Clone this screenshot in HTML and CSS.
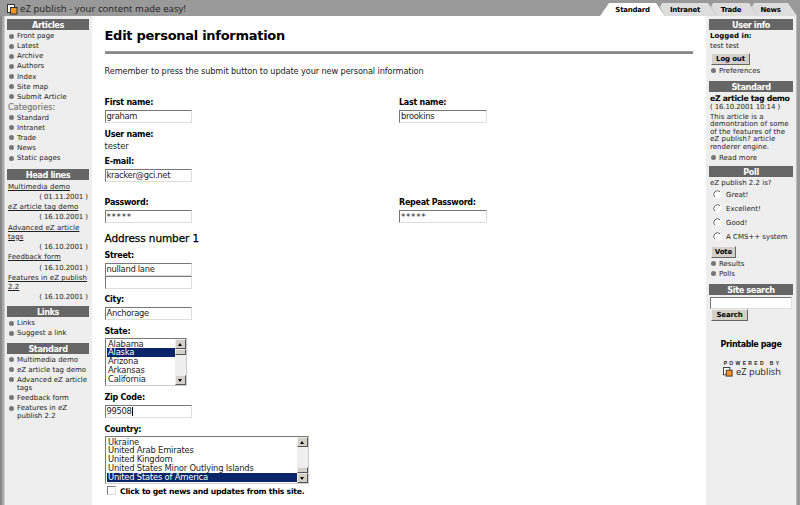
FILE: index.html
```html
<!DOCTYPE html>
<html lang="en">
<head>
<meta charset="utf-8">
<title>eZ publish</title>
<link rel="stylesheet" href="styles.css">
</head>
<body>
<header class="top">
  <svg class="logo" width="11" height="11" viewBox="0 0 11 11"><rect x=".5" y=".5" width="7" height="8" fill="#fff" stroke="#333"/><rect x="3.5" y="3.5" width="6.5" height="6.5" fill="#f7921c" stroke="#333"/></svg>
  <span class="brand">eZ publish - your content made easy!</span>
  <nav class="tabs">
    <a class="tab on"><span>Standard</span></a><a class="tab t2"><span>Intranet</span></a><a class="tab t3"><span>Trade</span></a><a class="tab t4"><span>News</span></a>
  </nav>
</header>
<div class="page">
  <aside class="left">
    <h2>Articles</h2>
    <ul class="list">
      <li>Front page</li><li>Latest</li><li>Archive</li><li>Authors</li><li>Index</li><li>Site map</li><li>Submit Article</li>
    </ul>
    <div class="cat">Categories:</div>
    <ul class="list second">
      <li>Standard</li><li>Intranet</li><li>Trade</li><li>News</li><li>Static pages</li>
    </ul>
    <h2>Head lines</h2>
    <div class="news">
      <a>Multimedia demo</a><p>( 01.11.2001 )</p>
      <a>eZ article tag demo</a><p>( 16.10.2001 )</p>
      <a>Advanced eZ article<br>tags</a><p>( 16.10.2001 )</p>
      <a>Feedback form</a><p>( 16.10.2001 )</p>
      <a>Features in eZ publish<br>2.2</a><p>( 16.10.2001 )</p>
    </div>
    <h2>Links</h2>
    <ul class="list links"><li>Links</li><li>Suggest a link</li></ul>
    <h2>Standard</h2>
    <ul class="list">
      <li>Multimedia demo</li><li>eZ article tag demo</li><li>Advanced eZ article<br>tags</li><li>Feedback form</li><li>Features in eZ<br>publish 2.2</li>
    </ul>
  </aside>
  <main class="main">
    <h1>Edit personal information</h1>
    <div class="rule"></div>
    <p class="intro">Remember to press the submit button to update your new personal information</p>
    <div class="pair names">
      <div><label>First name:</label><div class="input">graham</div></div>
      <div><label>Last name:</label><div class="input">brookins</div></div>
    </div>
    <div class="field user"><label>User name:</label><div class="value">tester</div></div>
    <div class="field email"><label>E-mail:</label><div class="input">kracker@gci.net</div></div>
    <div class="pair pass">
      <div><label>Password:</label><div class="input stars">*****</div></div>
      <div><label>Repeat Password:</label><div class="input stars">*****</div></div>
    </div>
    <h3>Address number 1</h3>
    <div class="field street"><label>Street:</label><div class="input">nulland lane</div><div class="input"></div></div>
    <div class="field city"><label>City:</label><div class="input">Anchorage</div></div>
    <div class="field state"><label>State:</label>
      <div class="select small">
        <div class="options"><div>Alabama</div><div class="sel">Alaska</div><div>Arizona</div><div>Arkansas</div><div>California</div></div>
        <div class="scroll"><i class="btn up"></i><i class="thumb"></i><i class="gap"></i><i class="btn down"></i></div>
      </div>
    </div>
    <div class="field zip"><label>Zip Code:</label><div class="input caret">99508</div></div>
    <div class="field country"><label>Country:</label>
      <div class="select wide">
        <div class="options"><div>Ukraine</div><div>United Arab Emirates</div><div>United Kingdom</div><div>United States Minor Outlying Islands</div><div class="sel">United States of America</div></div>
        <div class="scroll"><i class="btn up"></i><i class="gap"></i><i class="thumb"></i><i class="btn down"></i></div>
      </div>
    </div>
    <div class="check"><i></i><span>Click to get news and updates from this site.</span></div>
  </main>
  <aside class="right">
    <h2>User info</h2>
    <div class="logged">Logged in:</div>
    <div class="who">test test</div>
    <div class="button logout">Log out</div>
    <ul class="list prefs"><li>Preferences</li></ul>
    <h2>Standard</h2>
    <div class="headline">eZ article tag demo</div>
    <div class="date">( 16.10.2001 10:14 )</div>
    <div class="blurb">This article is a<br>demontration of some<br>of the features of the<br>eZ publish? article<br>renderer engine.</div>
    <ul class="list more"><li>Read more</li></ul>
    <h2>Poll</h2>
    <div class="question">eZ publish 2.2 is?</div>
    <div class="radio"><svg width="9" height="9" viewBox="0 0 9 9"><circle cx="4.5" cy="4.5" r="4" fill="#fff"/><path d="M2 7.2A3.6 3.6 0 0 1 7 1.7" fill="none" stroke="#666"/></svg>Great!</div>
    <div class="radio"><svg width="9" height="9" viewBox="0 0 9 9"><circle cx="4.5" cy="4.5" r="4" fill="#fff"/><path d="M2 7.2A3.6 3.6 0 0 1 7 1.7" fill="none" stroke="#666"/></svg>Excellent!</div>
    <div class="radio"><svg width="9" height="9" viewBox="0 0 9 9"><circle cx="4.5" cy="4.5" r="4" fill="#fff"/><path d="M2 7.2A3.6 3.6 0 0 1 7 1.7" fill="none" stroke="#666"/></svg>Good!</div>
    <div class="radio"><svg width="9" height="9" viewBox="0 0 9 9"><circle cx="4.5" cy="4.5" r="4" fill="#fff"/><path d="M2 7.2A3.6 3.6 0 0 1 7 1.7" fill="none" stroke="#666"/></svg>A CMS++ system</div>
    <div class="button vote">Vote</div>
    <ul class="list results"><li>Results</li><li>Polls</li></ul>
    <h2>Site search</h2>
    <div class="searchbox"></div>
    <div class="button search">Search</div>
    <div class="printable">Printable page</div>
    <div class="powered">POWERED BY</div>
    <div class="ez"><svg width="10" height="10" viewBox="0 0 11 11"><rect x=".5" y=".5" width="7" height="8" fill="#fff" stroke="#333"/><rect x="3.5" y="3.5" width="6.5" height="6.5" fill="#f7921c" stroke="#333"/></svg><span>eZ publish</span></div>
  </aside>
</div>
</body>
</html>
```

FILE: styles.css
```css
* { box-sizing: border-box; margin: 0; padding: 0; }
body { width: 800px; height: 505px; overflow: hidden; background: #999; font-family: "DejaVu Sans", Verdana, sans-serif; color: #222; font-size: 7px; white-space: nowrap; }
.top { display: flex; height: 16px; padding-left: 7px; }
.logo { margin-top: 4px; flex: none; }
.brand { margin-left: 2px; font-family: "Open Sans", sans-serif; font-size: 9.5px; line-height: 18px; letter-spacing: .08px; width: 400px; flex: none; color: #222; }
.tabs { display: flex; margin-left: 180px; padding-top: 3px; }
.tab { height: 13px; background: #ddd; font-size: 7px; line-height: 14px; font-weight: bold; letter-spacing: -.25px; color: #000; text-align: center; flex: none; }
.on { width: 65px; background: #fff; clip-path: polygon(0 100%, 9px 0, 56px 0, 65px 100%); }
.t2 { width: 58px; margin-left: -6px; padding-right: 6px; clip-path: polygon(1px 4px, 3px 0, 49px 0, 58px 100%, 6px 100%); }
.t3 { width: 48px; margin-left: -7px; padding-right: 6px; clip-path: polygon(1px 4px, 3px 0, 39px 0, 48px 100%, 7px 100%); }
.t4 { width: 46px; margin-left: -7px; padding-right: 7px; clip-path: polygon(1px 4px, 3px 0, 37px 0, 46px 100%, 7px 100%); }
.page { display: flex; height: 489px; }
.left { width: 92px; flex: none; padding: 3px 3px 0 7px; background: linear-gradient(90deg, #888 0 2px, #aaa 2px 4px, #ccc 4px 5px, #eee 5px); }
.main { width: 614px; flex: none; background: #fff; padding-left: 12.5px; }
.right { width: 94px; flex: none; padding: 3px 7px 0 3px; background: linear-gradient(90deg, #eee 0 90px, #bbb 90px 91px, #999 91px); }
h2 { height: 11px; background: #666; color: #fff; font-size: 8.2px; line-height: 12px; text-align: center; letter-spacing: -.4px; }
.list { list-style: none; padding-top: 2px; }
.list li { position: relative; padding-left: 10px; line-height: 8px; margin-bottom: 2.15px; letter-spacing: 0; }
.list li::before { content: ""; position: absolute; left: 2px; top: 1.5px; width: 5px; height: 5px; border-radius: 50%; background: #777; }
.cat { height: 9px; padding-left: 1px; font-size: 8px; line-height: 9px; color: #777; letter-spacing: .15px; -webkit-text-stroke: .2px #777; }
.second { height: 57px; }
.left .list:first-of-type { height: 72.5px; }
.news { height: 126.5px; padding: 3px 1px 0; }
.news a { display: block; line-height: 8.6px; text-decoration: underline; letter-spacing: .07px; }
.news p { text-align: right; line-height: 10px; margin: .6px 0 1.6px; letter-spacing: -.08px; }
.left .links { height: 25.5px; }
h1 { font-size: 13px; line-height: 16px; padding-top: 12px; color: #000; letter-spacing: -.28px; }
.rule { width: 588.5px; height: 3px; margin-top: 7px; background: #888; border-top: 1px solid #999; }
.intro { font-size: 8.2px; line-height: 10px; margin-top: 12px; letter-spacing: -.11px; }
.pair { display: grid; grid-template-columns: 294.5px 100px; }
label { display: block; height: 12px; line-height: 10px; font-size: 8px; font-weight: bold; color: #000; letter-spacing: -.27px; }
.input { width: 87.5px; height: 13px; border: 1px solid #ddd; border-top-color: #777; border-left-color: #777; background: #fff; font-size: 8.4px; line-height: 11px; padding-left: 1px; letter-spacing: -.3px; }
.names { margin-top: 22px; }
.user { margin-top: 6.5px; }
.value { font-size: 8.4px; line-height: 10px; height: 10px; margin-top: -1px; letter-spacing: -.1px; }
.email { margin-top: 6.5px; }
.pass { margin-top: 15.5px; }
.stars { font-size: 8.7px; letter-spacing: .7px; padding-top: 1px; }
h3 { font-size: 10.5px; line-height: 12px; margin-top: 9px; font-weight: normal; -webkit-text-stroke: .25px #000; color: #000; letter-spacing: -.1px; }
.street { margin-top: 7.5px; }
.city { margin-top: 6px; }
.state { margin-top: 6.5px; }
.select { display: flex; height: 48px; border: 1px solid #ccc; border-top-color: #777; border-left-color: #777; margin-top: -1px; }
.small { width: 82.5px; }
.wide { width: 204.5px; }
.options { flex: 1; padding: 1px 0 0 1px; font-size: 8.4px; letter-spacing: -.2px; }
.options div { height: 8.9px; line-height: 9px; padding-left: 1.5px; }
.sel { background: #0a246a; color: #fff; }
.scroll { width: 11px; display: flex; flex-direction: column; background: #eee; }
.btn, .thumb { display: block; background: #d4d0c8; border: 1px solid #eee; border-right-color: #555; border-bottom-color: #555; }
.btn { height: 10px; position: relative; }
.btn::after { content: ""; position: absolute; left: 2px; top: 3px; border: 2.5px solid transparent; border-top-width: 0; border-bottom: 3px solid #000; }
.down::after { transform: rotate(180deg); }
.thumb { height: 6px; }
.gap { flex: 1; }
.zip { margin-top: 7.5px; }
.caret::after { content: ""; display: inline-block; width: 1px; height: 9px; background: #000; vertical-align: -2px; }
.country { margin-top: 6.5px; }
.check { display: flex; margin-top: 2px; padding-left: 2px; font-size: 7.7px; font-weight: bold; color: #000; letter-spacing: -.23px; }
.check i { width: 9px; height: 9px; border: 1px solid #ddd; border-top-color: #777; border-left-color: #777; }
.check span { margin-left: 4.5px; line-height: 12px; }
.logged { font-size: 7px; font-weight: bold; color: #000; line-height: 10px; padding: 1px 0 0 1px; }
.who { line-height: 10px; padding-left: 1px; }
.button { border: 1px solid #eee; border-right-color: #666; border-bottom-color: #666; background: #d4d0c8; font-weight: bold; font-size: 7px; letter-spacing: -.15px; color: #000; text-align: center; height: 12px; line-height: 10px; margin-left: 2px; }
.logout { width: 39px; margin-top: 1.5px; }
.prefs { height: 16px; }
.headline { font-size: 7.8px; font-weight: bold; color: #000; line-height: 10px; padding: 2px 0 0 1px; letter-spacing: -.34px; }
.date { line-height: 7px; padding-left: 1px; letter-spacing: -.12px; }
.blurb { line-height: 7.65px; padding: 3px 0 0 1px; letter-spacing: .04px; }
.more { height: 14px; }
.question { line-height: 10px; padding: 1px 0 0 1px; }
.radio { display: flex; height: 14px; align-items: center; padding-left: 4px; }
.radio svg { margin-right: 4px; }
.vote { width: 25px; margin-top: 2px; }
.results { height: 26.5px; }
.searchbox { width: 82px; height: 12px; margin: 1.5px 0 0 1px; border: 1px solid #ddd; border-top-color: #777; border-left-color: #777; background: #fff; }
.search { width: 37px; margin-top: .5px; }
.printable { text-align: center; font-size: 8px; font-weight: bold; color: #000; line-height: 10px; margin-top: 19px; letter-spacing: -.4px; }
.powered { text-align: center; font-family: "Liberation Sans", sans-serif; font-weight: bold; font-size: 5px; letter-spacing: 2.35px; line-height: 6px; margin-top: 10px; padding-left: 3px; }
.ez { display: flex; font-family: "Open Sans", sans-serif; font-size: 9.3px; line-height: 10px; padding-left: 14px; margin-top: 1px; }
.ez span { margin-left: 3px; }
```
